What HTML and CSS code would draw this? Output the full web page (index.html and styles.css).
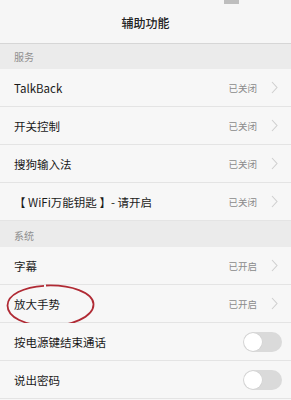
FILE: index.html
```html
<!DOCTYPE html>
<html lang="zh-CN">
<head>
<meta charset="utf-8">
<link rel="stylesheet" href="styles.css">
</head>
<body>
<div class="screen">
  <div class="status"><span class="status-mark"></span></div>
  <header class="titlebar">辅助功能</header>
  <div class="section">服务</div>
  <div class="row"><span class="label">TalkBack</span><span class="state">已关闭</span><svg class="chev" viewBox="0 0 7 13" width="7" height="13"><polyline points="1,1 6,6.5 1,12" fill="none" stroke="#cfcfcf" stroke-width="1.1"/></svg></div>
  <div class="row"><span class="label">开关控制</span><span class="state">已关闭</span><svg class="chev" viewBox="0 0 7 13" width="7" height="13"><polyline points="1,1 6,6.5 1,12" fill="none" stroke="#cfcfcf" stroke-width="1.1"/></svg></div>
  <div class="row"><span class="label">搜狗输入法</span><span class="state">已关闭</span><svg class="chev" viewBox="0 0 7 13" width="7" height="13"><polyline points="1,1 6,6.5 1,12" fill="none" stroke="#cfcfcf" stroke-width="1.1"/></svg></div>
  <div class="row"><span class="label">【 WiFi万能钥匙 】- 请开启</span><span class="state">已关闭</span><svg class="chev" viewBox="0 0 7 13" width="7" height="13"><polyline points="1,1 6,6.5 1,12" fill="none" stroke="#cfcfcf" stroke-width="1.1"/></svg></div>
  <div class="section section-b">系统</div>
  <div class="row"><span class="label">字幕</span><span class="state">已开启</span><svg class="chev" viewBox="0 0 7 13" width="7" height="13"><polyline points="1,1 6,6.5 1,12" fill="none" stroke="#cfcfcf" stroke-width="1.1"/></svg></div>
  <div class="row marked"><span class="label">放大手势</span><span class="state">已开启</span><svg class="chev" viewBox="0 0 7 13" width="7" height="13"><polyline points="1,1 6,6.5 1,12" fill="none" stroke="#cfcfcf" stroke-width="1.1"/></svg>
    <svg class="circle" viewBox="0 0 90 44" width="90" height="44"><path d="M40 1.5 C65 0.5 87 8.5 87.5 20 C88 33 64 42.5 42 42 C19 41.5 1.5 33.5 1.5 21.5 C1.5 10.5 18 3 38 1.8" fill="none" stroke="#b02a34" stroke-width="1.8"/></svg>
  </div>
  <div class="row"><span class="label">按电源键结束通话</span><span class="switch"><span class="knob"></span></span></div>
  <div class="row"><span class="label">说出密码</span><span class="switch"><span class="knob"></span></span></div>
</div>
</body>
</html>
```
FILE: styles.css
```css
* { box-sizing: border-box; }
html, body { margin: 0; padding: 0; }
body {
  width: 291px;
  height: 400px;
  overflow: hidden;
  background: #f7f7f7;
  font-family: "Noto Sans CJK SC", "Noto Sans", sans-serif;
  color: #222;
}
.screen { display: flex; flex-direction: column; }
.status {
  height: 8px;
  background: #f6f6f6;
  position: relative;
}
.status-mark {
  position: absolute;
  left: 224px;
  top: 0;
  width: 15px;
  height: 4px;
  background: #9a9a9a;
  opacity: 0.6;
}
.titlebar {
  height: 36px;
  background: #f6f6f6;
  border-bottom: 1px solid #d6d6d6;
  display: flex;
  align-items: center;
  justify-content: center;
  font-size: 12px;
  font-weight: 500;
  color: #222;
  padding-bottom: 6px;
}
.section {
  height: 25px;
  background: #ebebeb;
  display: flex;
  align-items: center;
  padding-left: 14px;
  font-size: 10px;
  color: #8f8f8f;
}
.section-b { height: 26px; padding-top: 2px; }
.row {
  position: relative;
  height: 38px;
  border-bottom: 1px solid #e4e4e4;
  background: #f7f7f7;
  display: flex;
  align-items: center;
  padding: 0 12px 0 14px;
}
.label {
  flex: 1;
  font-size: 11.5px;
  color: #1a1a1a;
}
.state {
  font-size: 9.5px;
  color: #8a8a8a;
  margin-right: 14px;
}
.chev { display: block; margin-right: 1px; }
.switch {
  width: 39px;
  height: 20px;
  border-radius: 10px;
  background: #dadada;
  position: relative;
  margin-right: -3px;
}
.knob {
  position: absolute;
  left: 1px;
  top: 1px;
  width: 18px;
  height: 18px;
  border-radius: 50%;
  background: #fff;
  box-shadow: 0 0 0 0.5px #cfcfcf;
}
.circle {
  position: absolute;
  left: 6px;
  top: -1px;
}
```
